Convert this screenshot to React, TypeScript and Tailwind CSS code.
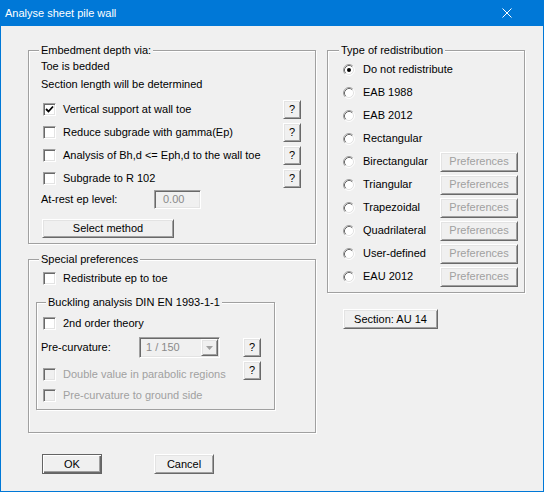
import type { ReactNode } from 'react';

// classic 3D edges
const raised =
  'border border-t-white border-l-white border-r-[#696969] border-b-[#696969] bg-[#f0f0f0] shadow-[inset_1px_1px_0_#e3e3e3,inset_-1px_-1px_0_#a0a0a0]';
const sunken =
  'border border-t-[#a0a0a0] border-l-[#a0a0a0] border-r-white border-b-white shadow-[inset_1px_1px_0_#696969,inset_-1px_-1px_0_#e3e3e3]';

function GroupBox({
  title,
  className = '',
  legendClass = 'ml-[10px]',
  children,
}: {
  title: string;
  className?: string;
  legendClass?: string;
  children: ReactNode;
}) {
  return (
    <fieldset className={`border border-[#a0a0a0] shadow-[inset_1px_1px_0_#fff,1px_1px_0_#fff] ${className}`}>
      <legend className={`${legendClass} px-[2px] leading-[14px] bg-[#f0f0f0]`}>{title}</legend>
      {children}
    </fieldset>
  );
}

function CheckBox({ checked = false, disabled = false }: { checked?: boolean; disabled?: boolean }) {
  return (
    <span
      className={`${sunken} ${disabled ? 'bg-[#f0f0f0]' : 'bg-white'} w-[13px] h-[13px] shrink-0 flex items-center justify-center`}
    >
      {checked && (
        <svg width="9" height="9" viewBox="0 0 9 9">
          <path d="M1 4 L3.5 6.5 L8 1.5" stroke="#000" strokeWidth="1.8" fill="none" />
        </svg>
      )}
    </span>
  );
}

function Radio({ checked = false }: { checked?: boolean }) {
  return (
    <svg width="12" height="12" viewBox="0 0 12 12" className="shrink-0">
      <circle cx="6" cy="6" r="5" fill="#fff" />
      <path d="M2.11 9.89 A5.5 5.5 0 0 1 9.89 2.11" stroke="#a0a0a0" fill="none" />
      <path d="M9.89 2.11 A5.5 5.5 0 0 1 2.11 9.89" stroke="#fff" fill="none" />
      <path d="M2.82 9.18 A4.5 4.5 0 0 1 9.18 2.82" stroke="#696969" fill="none" />
      <path d="M9.18 2.82 A4.5 4.5 0 0 1 2.82 9.18" stroke="#e3e3e3" fill="none" />
      {checked && <circle cx="6" cy="6" r="2" fill="#000" />}
    </svg>
  );
}

function HelpButton({ className = '' }: { className?: string }) {
  return (
    <button className={`${raised} w-[18px] h-[19px] flex items-center justify-center leading-none ${className}`}>?</button>
  );
}

function CheckRow({
  label,
  checked,
  disabled,
  help,
  className = 'h-[23px]',
}: {
  label: string;
  checked?: boolean;
  disabled?: boolean;
  help?: boolean;
  className?: string;
}) {
  return (
    <div className={`flex items-center ${className}`}>
      <span className="ml-[2px]">
        <CheckBox checked={checked} disabled={disabled} />
      </span>
      <span className={`ml-[7px] ${disabled ? 'text-[#a0a0a0]' : ''}`}>{label}</span>
      {help && <HelpButton className="ml-auto" />}
    </div>
  );
}

const redistribution = [
  { label: 'Do not redistribute', checked: true },
  { label: 'EAB 1988' },
  { label: 'EAB 2012' },
  { label: 'Rectangular' },
  { label: 'Birectangular', prefs: true },
  { label: 'Triangular', prefs: true },
  { label: 'Trapezoidal', prefs: true },
  { label: 'Quadrilateral', prefs: true },
  { label: 'User-defined', prefs: true },
  { label: 'EAU 2012', prefs: true },
];

export default function App() {
  return (
    <div className="w-[544px] h-[492px] bg-[#0078d7] flex flex-col font-['Liberation_Sans',Arial,sans-serif] text-[11px] text-black select-none">
      {/* title bar */}
      <div className="h-[26px] shrink-0 flex items-center pl-[5px] pr-[32px] text-white text-[11px]">
        <span>Analyse sheet pile wall</span>
        <svg width="10" height="10" viewBox="0 0 10 10" className="ml-auto">
          <path d="M0.5 0.5 L9.5 9.5 M9.5 0.5 L0.5 9.5" stroke="#fff" strokeWidth="1" />
        </svg>
      </div>

      <div className="flex-1 mx-[1px] mb-[1px] bg-[#f0f0f0] pl-[27px] pt-[17px]">
        <div className="flex gap-[11px] items-start">
          {/* left column */}
          <div className="w-[288px] flex flex-col">
            <GroupBox title="Embedment depth via:" className="pb-[5px]">
              <div className="pl-[12px] pr-[14px]">
                <div className="h-[18px] flex items-center">Toe is bedded</div>
                <div className="h-[18px] flex items-center">Section length will be determined</div>
                <div className="mt-[5px]">
                  <CheckRow label="Vertical support at wall toe" checked help />
                  <CheckRow label="Reduce subgrade with gamma(Ep)" help />
                  <CheckRow label="Analysis of Bh,d <= Eph,d to the wall toe" help />
                  <CheckRow label="Subgrade to R 102" help />
                </div>
                <div className="h-[19px] flex items-center">
                  <span className="w-[113px]">At-rest ep level:</span>
                  <div className={`${sunken} w-[47px] h-[19px] bg-[#f0f0f0] text-[#8a8a8a] pl-[8px] flex items-center`}>
                    0.00
                  </div>
                </div>
                <button className={`${raised} mt-[10px] ml-[1px] w-[132px] h-[19px] flex items-center justify-center`}>
                  Select method
                </button>
              </div>
            </GroupBox>

            <GroupBox title="Special preferences" className="mt-[8px] pb-[22px]">
              <div className="pl-[12px] mt-[1px]">
                <CheckRow label="Redistribute ep to toe" />
              </div>
              <GroupBox
                title="Buckling analysis DIN EN 1993-1-1"
                legendClass="ml-[9px]"
                className="mt-[5px] ml-[7px] w-[239px] pb-[4px]"
              >
                <div className="pl-[4px]">
                  <CheckRow label="2nd order theory" className="h-[23px] mt-[3px]" />
                  <div className="h-[21px] mt-[2px] flex items-center">
                    <span className="w-[98px]">Pre-curvature:</span>
                    <div className={`${sunken} w-[81px] h-[21px] bg-[#f0f0f0] flex items-center pl-[6px] pr-[1px]`}>
                      <span className="text-[#8a8a8a]">1 / 150</span>
                      <div className={`${raised} ml-auto w-[17px] h-[17px] flex items-center justify-center`}>
                        <svg width="7" height="4" viewBox="0 0 7 4">
                          <path d="M0 0 H7 L3.5 4 Z" fill="#a0a0a0" />
                        </svg>
                      </div>
                    </div>
                    <HelpButton className="ml-[23px]" />
                  </div>
                  <div className="h-[22px] mt-[5px] flex items-center">
                    <CheckRow label="Double value in parabolic regions" disabled className="h-[22px] w-[202px]" />
                    <HelpButton className="self-start -mt-[2px]" />
                  </div>
                  <CheckRow label="Pre-curvature to ground side" disabled className="h-[20px]" />
                </div>
              </GroupBox>
            </GroupBox>
          </div>

          {/* right column */}
          <div className="w-[198px] flex flex-col">
            <GroupBox title="Type of redistribution" legendClass="ml-[11px]" className="pb-[4px]">
              <div className="mt-[1px] pl-[15px] pr-[6px]">
                {redistribution.map((r) => (
                  <div key={r.label} className="h-[23px] flex items-center">
                    <Radio checked={r.checked} />
                    <span className="ml-[8px]">{r.label}</span>
                    {r.prefs && (
                      <button
                        className={`${raised} ml-auto w-[78px] h-[20px] flex items-center justify-center text-[#a0a0a0]`}
                      >
                        Preferences
                      </button>
                    )}
                  </div>
                ))}
              </div>
            </GroupBox>
            <button className={`${raised} mt-[16px] ml-[16px] w-[95px] h-[20px] flex items-center justify-center`}>
              Section: AU 14
            </button>
          </div>
        </div>

        {/* dialog buttons */}
        <div className="flex mt-[21px] ml-[14px]">
          <button className="w-[60px] h-[20px] border border-[#646464] bg-[#f0f0f0] shadow-[inset_1px_1px_0_#fff,inset_-1px_-1px_0_#696969,inset_-2px_-2px_0_#a0a0a0] flex items-center justify-center">
            OK
          </button>
          <button className={`${raised} ml-[52px] w-[60px] h-[20px] flex items-center justify-center`}>Cancel</button>
        </div>
      </div>
    </div>
  );
}
